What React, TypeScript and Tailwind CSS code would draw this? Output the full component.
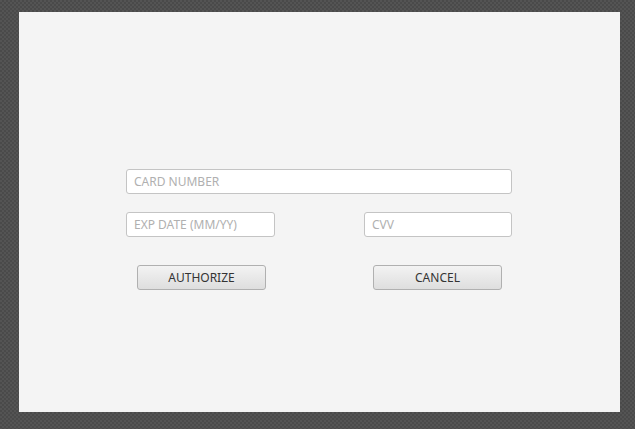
import React from "react";

export default function App() {
  const font = { fontFamily: '"Noto Sans", "Open Sans", sans-serif' };
  return (
    <div
      className="w-[635px] h-[429px] bg-[#4c4c4c] bg-[repeating-conic-gradient(#4a4a4a_0_25%,#545454_0_50%)] bg-[length:4px_4px] pt-[12px] pl-[19px]"
      style={font}
    >
      <div className="w-[601px] h-[400px] bg-[#f4f4f4] flex flex-col items-start pl-[107px] pt-[157px]">
        <div className="w-[386px] flex flex-col">
          <input
            placeholder="CARD NUMBER"
            className="h-[25px] w-full bg-white border border-[#c4c4c4] rounded-[3px] px-[7px] text-[12px] text-[#333] placeholder:text-[#b0b0b0] outline-none"
          />
          <div className="flex justify-between mt-[18px]">
            <input
              placeholder="EXP DATE (MM/YY)"
              className="h-[25px] w-[149px] bg-white border border-[#c4c4c4] rounded-[3px] px-[7px] text-[12px] text-[#333] placeholder:text-[#b0b0b0] outline-none"
            />
            <input
              placeholder="CVV"
              className="h-[25px] w-[148px] bg-white border border-[#c4c4c4] rounded-[3px] px-[7px] text-[12px] text-[#333] placeholder:text-[#b0b0b0] outline-none"
            />
          </div>
          <div className="flex justify-between mt-[28px] pl-[11px] pr-[10px]">
            <button className="h-[25px] w-[129px] rounded-[3px] border border-[#b0b0b0] bg-gradient-to-b from-[#f3f3f3] to-[#dedede] text-[12px] text-[#333]">
              AUTHORIZE
            </button>
            <button className="h-[25px] w-[129px] rounded-[3px] border border-[#b0b0b0] bg-gradient-to-b from-[#f3f3f3] to-[#dedede] text-[12px] text-[#333]">
              CANCEL
            </button>
          </div>
        </div>
      </div>
    </div>
  );
}
